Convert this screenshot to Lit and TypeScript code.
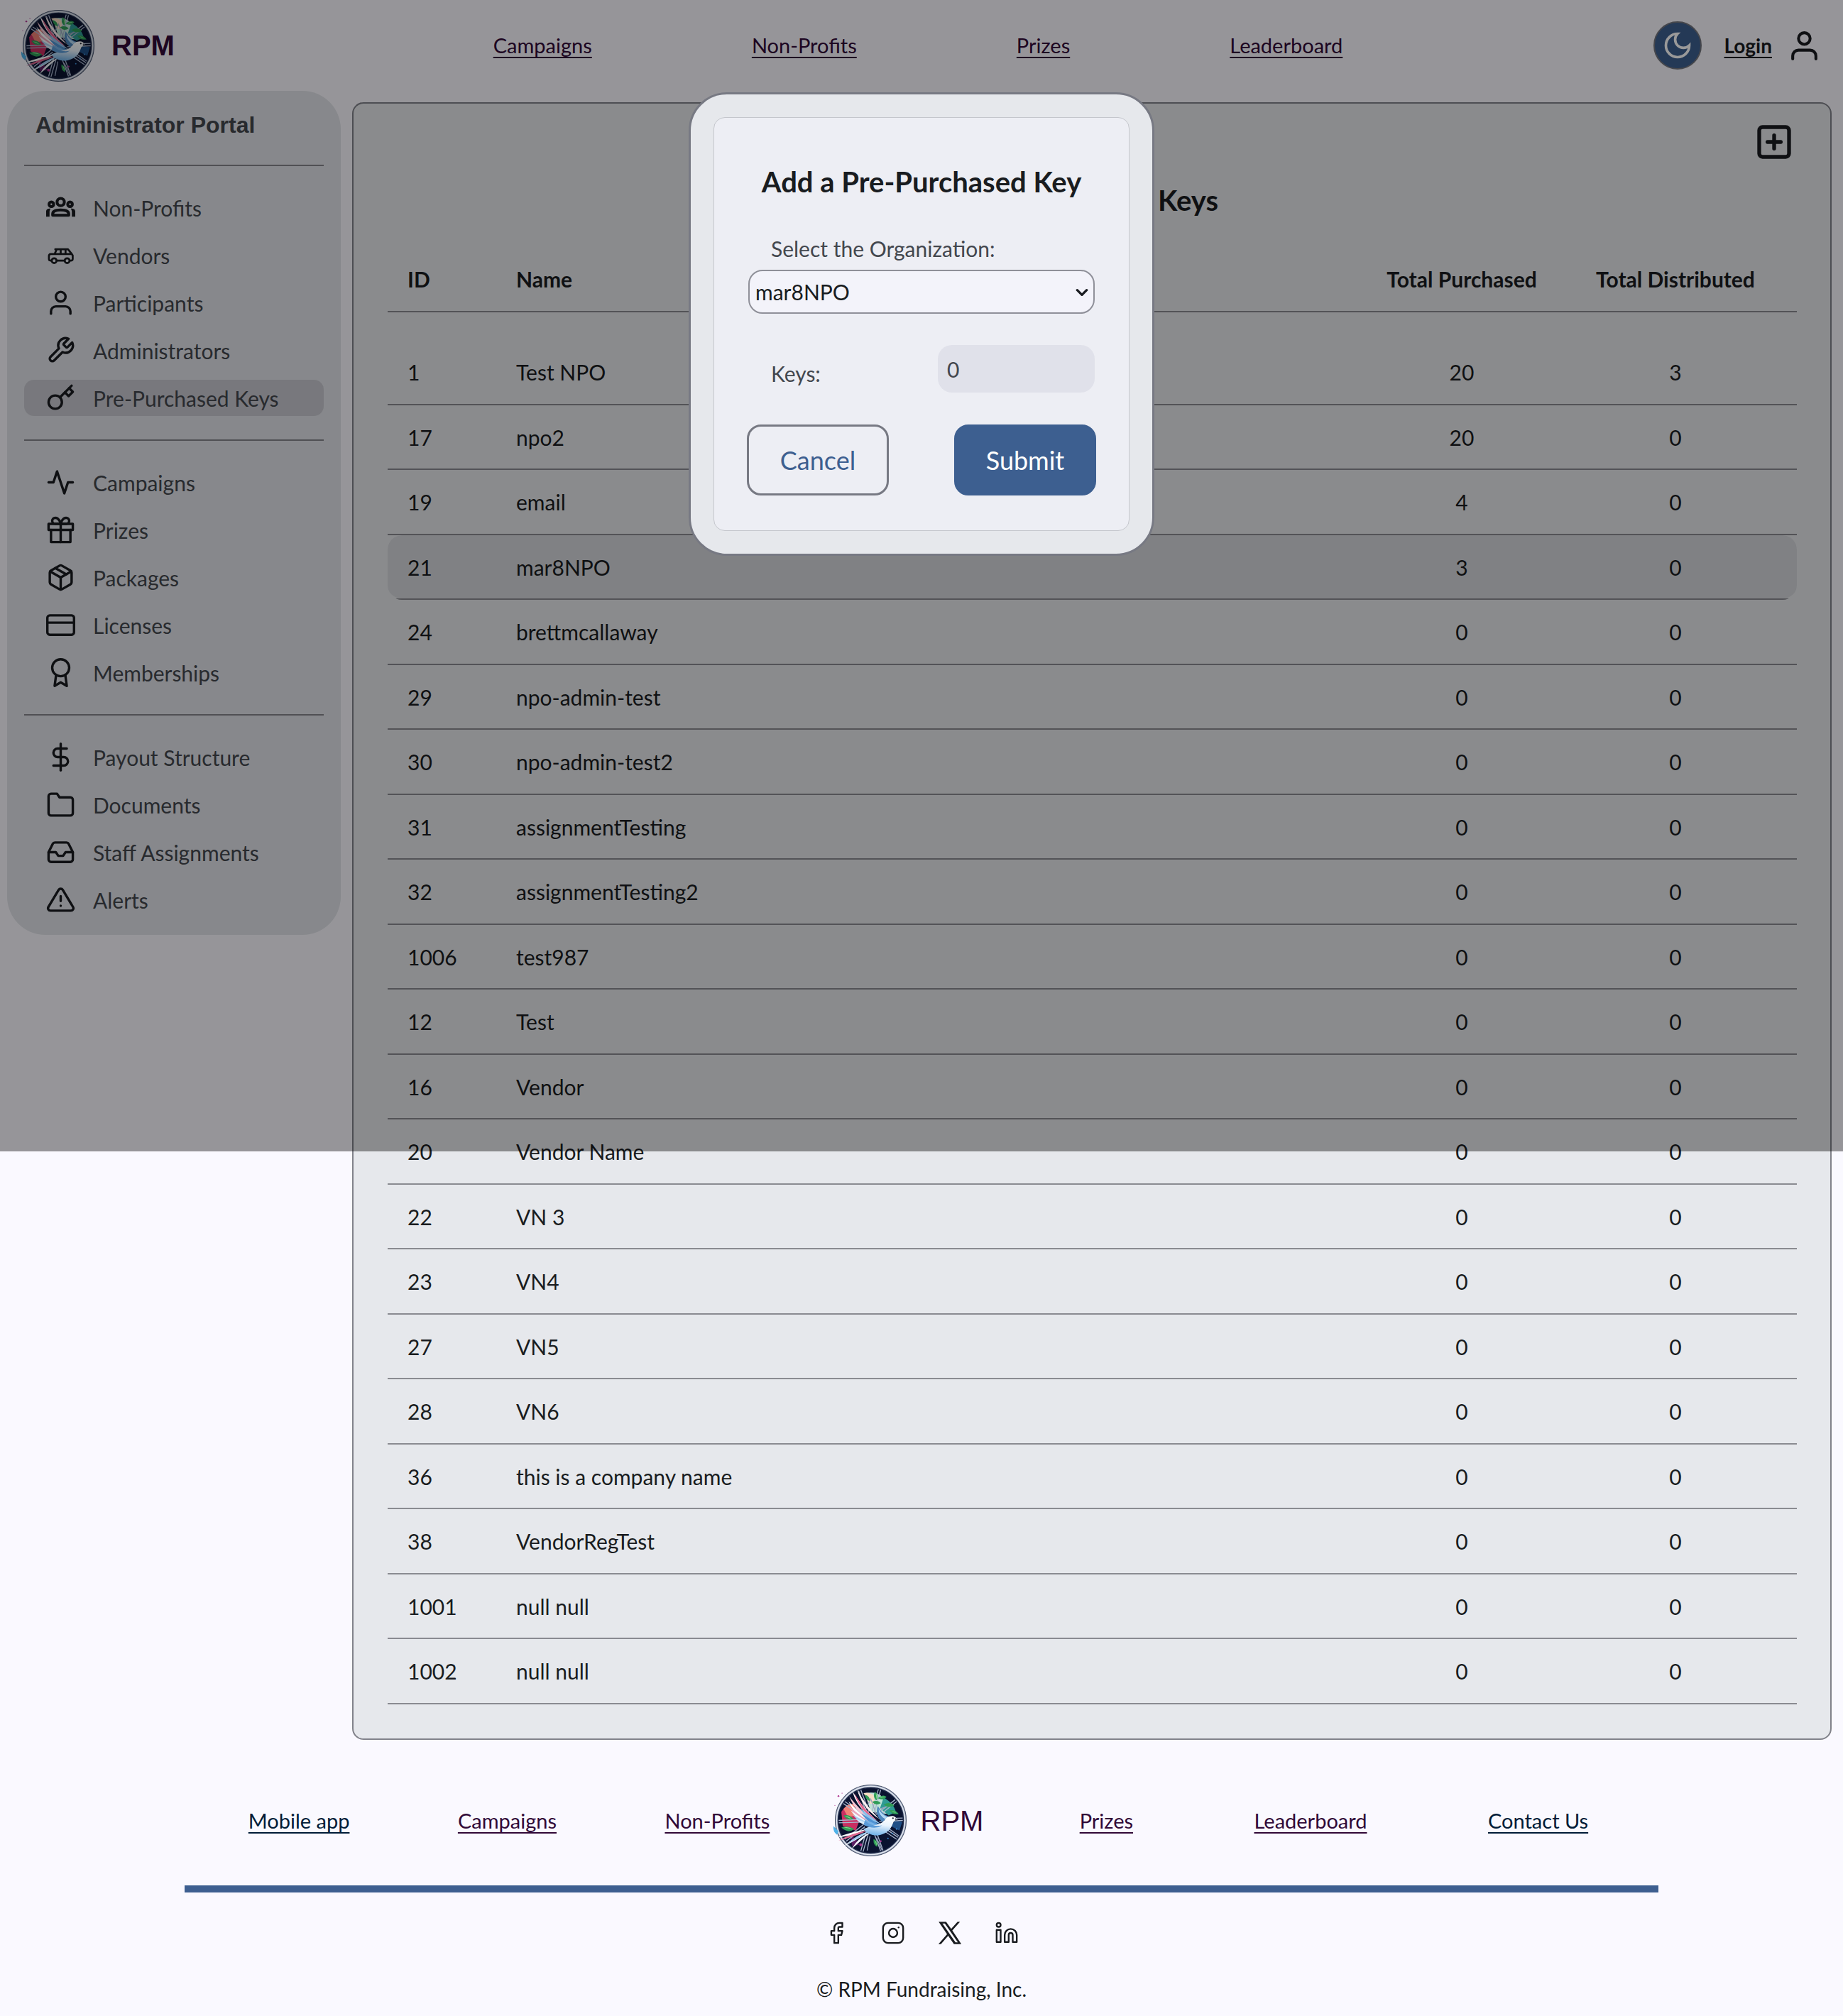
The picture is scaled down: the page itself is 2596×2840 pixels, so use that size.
import { LitElement, html, css, svg, nothing } from "lit";
import { customElement, property } from "lit/decorators.js";
import { classMap } from "lit/directives/class-map.js";

const glyphs: Record<string, unknown> = {
  user: svg`<path d="M20 21v-2a4 4 0 0 0-4-4H8a4 4 0 0 0-4 4v2"/><circle cx="12" cy="7" r="4"/>`,
  wrench: svg`<path d="M14.7 6.3a1 1 0 0 0 0 1.4l1.6 1.6a1 1 0 0 0 1.4 0l3.77-3.77a6 6 0 0 1-7.94 7.94l-6.91 6.91a2.12 2.12 0 0 1-3-3l6.91-6.91a6 6 0 0 1 7.94-7.94l-3.76 3.76z"/>`,
  key: svg`<circle cx="7.5" cy="15.5" r="5.5"/><path d="m21 2-9.6 9.6"/><path d="m15.5 7.5 3 3L22 7l-3-3"/>`,
  activity: svg`<polyline points="22 12 18 12 15 21 9 3 6 12 2 12"/>`,
  gift: svg`<polyline points="20 12 20 22 4 22 4 12"/><rect x="2" y="7" width="20" height="5"/><path d="M12 22V7"/><path d="M12 7H7.5a2.5 2.5 0 0 1 0-5C11 2 12 7 12 7z"/><path d="M12 7h4.5a2.5 2.5 0 0 0 0-5C13 2 12 7 12 7z"/>`,
  pack: svg`<path d="M16.5 9.4 7.55 4.24"/><path d="M21 16V8a2 2 0 0 0-1-1.73l-7-4a2 2 0 0 0-2 0l-7 4A2 2 0 0 0 3 8v8a2 2 0 0 0 1 1.73l7 4a2 2 0 0 0 2 0l7-4A2 2 0 0 0 21 16z"/><polyline points="3.29 7 12 12 20.71 7"/><path d="M12 22V12"/>`,
  card: svg`<rect x="1" y="4" width="22" height="16" rx="2"/><path d="M1 10h22"/>`,
  award: svg`<circle cx="12" cy="8" r="7"/><polyline points="8.21 13.89 7 23 12 20 17 23 15.79 13.88"/>`,
  dollar: svg`<path d="M12 1v22"/><path d="M17 5H9.5a3.5 3.5 0 0 0 0 7h5a3.5 3.5 0 0 1 0 7H6"/>`,
  folder: svg`<path d="M22 19a2 2 0 0 1-2 2H4a2 2 0 0 1-2-2V5a2 2 0 0 1 2-2h5l2 3h9a2 2 0 0 1 2 2z"/>`,
  inbox: svg`<polyline points="22 12 16 12 14 15 10 15 8 12 2 12"/><path d="M5.45 5.11 2 12v6a2 2 0 0 0 2 2h16a2 2 0 0 0 2-2v-6l-3.45-6.89A2 2 0 0 0 16.76 4H7.24a2 2 0 0 0-1.79 1.11z"/>`,
  alert: svg`<path d="M10.29 3.86 1.82 18a2 2 0 0 0 1.71 3h16.94a2 2 0 0 0 1.71-3L13.71 3.86a2 2 0 0 0-3.42 0z"/><path d="M12 9v4M12 17v.01"/>`,
  people: svg`<g stroke-width="2.4"><circle cx="12" cy="7.4" r="3"/><circle cx="4.3" cy="9.2" r="1.9"/><circle cx="19.7" cy="9.2" r="1.9"/><path d="M5.4 18.3v-1.1c0-2.4 2.800-3.300 6.600-3.300s6.600.9 6.600 3.300v1.100z"/></g><path class="solid" d="M0 19.500v-4.400c0-1.600 1.400-2.400 3.700-2.400-.6 1-.9 1.900-.9 3.100v3.700zM24 19.500v-4.400c0-1.600-1.400-2.400-3.700-2.400.6 1 .9 1.900.9 3.100v3.700z"/>`,
  van: svg`<g stroke-width="1.6"><path d="M4.500 16.400H3.600a1.300 1.300 0 0 1-1.300-1.300v-2.500a1.600 1.600 0 0 1 1.500-1.600h17.400l.7 1.300v2.800a1.300 1.300 0 0 1-1.300 1.300h-.5M8.600 16.400h6.600M7 11l1.700-3.900h9.300L21.200 11M12 7.100V11M16 7.100V11M7.500 7.100h1.300"/><circle cx="6.600" cy="16.500" r="2"/><circle cx="17.300" cy="16.500" r="2"/></g>`,
  plus: svg`<rect x="3" y="3" width="18" height="18" rx="2"/><path d="M12 8v8M8 12h8"/>`,
  moon: svg`<path stroke-linejoin="miter" d="M12 3a6 6 0 0 0 9 9 9 9 0 1 1-9-9z"/>`,
  chevron: svg`<path d="m4 8 8 8 8-8"/>`,
  facebook: svg`<path d="M18 2h-3a5 5 0 0 0-5 5v3H7v4h3v8h4v-8h3l1-4h-4V7a1 1 0 0 1 1-1h3z"/>`,
  instagram: svg`<rect x="2" y="2" width="20" height="20" rx="5"/><circle cx="12" cy="12" r="4.2"/><path d="M17.500 6.500v.01"/>`,
  x: svg`<path class="solid" d="M.8.8h7.400l5.100 7.200L19.600.8h2.500l-7.700 8.800 9 13.600h-7.400l-5.700-8.300-7.200 8.300H.6l8.600-9.900zM4.600 2.600l13 18.700h2.300L7 2.600z"/>`,
  linkedin: svg`<path d="M16 8a6 6 0 0 1 6 6v7h-4v-7a2 2 0 0 0-4 0v7h-4v-7a6 6 0 0 1 6-6z"/><rect x="2" y="9" width="4" height="12"/><circle cx="4" cy="4" r="2"/>`,
};

@customElement("app-icon")
export class AppIcon extends LitElement {
  @property() name = "user";
  static styles = css`
    :host { display: block; width: 41px; height: 41px; flex: none; }
    svg { display: block; width: 100%; height: 100%; fill: none; stroke: currentColor; stroke-width: var(--stroke, 2); stroke-linecap: round; stroke-linejoin: round; overflow: visible; }
    .solid { fill: currentColor; stroke: none; }
  `;
  render() {
    return html`<svg viewBox="0 0 24 24" aria-hidden="true">${glyphs[this.name] ?? nothing}</svg>`;
  }
}

/** One feather: tip x/y, root x/y, sideways bow of its spine, half width, fill. */
type Feather = [number, number, number, number, number, number, string];

const wingFeathers: Feather[] = [
  [24, 9, 58, 50, -7, 4, "#ffffff"],
  [31, 7, 62, 48, -7, 3, "#fdf1f0"],
  [20, 16, 56, 52, -8, 4, "#f3c6d3"],
  [27, 12, 60, 51, -8, 3, "#e2638c"],
  [19, 23, 56, 55, -8, 4, "#ffffff"],
  [20, 30, 56, 56, -7, 4, "#e9a6bd"],
  [22, 36, 56, 57, -6, 4, "#f2f8fe"],
  [25, 42, 57, 58, -5, 4, "#a8d0f0"],
  [29, 48, 60, 59, -4, 4, "#dcedfa"],
  [35, 33, 64, 55, -4, 4, "#8cc0ea"],
  [37, 40, 64, 57, -4, 4, "#4f93d3"],
  [40, 48, 64, 59, -3, 4, "#74b0e4"],
];

const tailFeathers: Feather[] = [
  [2, 74, 46, 62, -1, 3, "#ffffff"],
  [5, 78, 46, 64, 1, 3, "#e0678f"],
  [12, 86, 48, 65, 1, 3, "#ffffff"],
  [17, 83, 48, 65, 2, 3, "#9ecbf0"],
  [23, 90, 50, 66, 3, 3, "#f4f8fd"],
];

function feather([tx, ty, rx, ry, bow, half, fill]: Feather) {
  const len = Math.hypot(rx - tx, ry - ty);
  const nx = -(ry - ty) / len;
  const ny = (rx - tx) / len;
  const mx = (tx + rx) / 2;
  const my = (ty + ry) / 2;
  const at = (k: number) => `${mx - nx * k} ${my - ny * k}`;
  return svg`<path d="M${tx} ${ty}Q${at(bow - half)} ${rx} ${ry}Q${at(bow + half)} ${tx} ${ty}z" fill=${fill}/>`;
}

@customElement("rpm-logo")
export class RpmLogo extends LitElement {
  static styles = css`
    :host { display: block; width: 101px; height: 101px; flex: none; }
    svg { display: block; width: 100%; height: 100%; overflow: visible; }
  `;
  render() {
    const spokes = Array.from({ length: 20 }, (_, i) => {
      const a = (i * Math.PI) / 10 + 0.12;
      const b = a + (i % 2 ? 0.12 : -0.12);
      return svg`<line x1=${50 + 12 * Math.cos(a)} y1=${50 + 12 * Math.sin(a)} x2=${50 + 45 * Math.cos(b)} y2=${50 + 45 * Math.sin(b)}/>`;
    });
    return html`<svg viewBox="0 0 100 100" role="img" aria-label="RPM dove and wheel">
      <defs>
        <linearGradient id="body" x1="0.6" y1="0" x2="0.4" y2="1">
          <stop offset="0" stop-color="#fff"/><stop offset=".45" stop-color="#eaf4fd"/><stop offset="1" stop-color="#6fb0e6"/>
        </linearGradient>
      </defs>
      <circle cx="50" cy="50" r="49.5" fill="#a7b1c4" stroke="#47526b"/>
      <circle cx="50" cy="50" r="45.500" fill="#0a1330"/>
      <path d="M9 38q6-10 16-10l10 20-6 16-18-6z" fill="#c92f62"/>
      <path d="M12 34q6-8 14-7l6 16-14 2z" fill="#f08176"/>
      <path d="M42 12q16-3 24 5l16 14-8 10-24-3z" fill="#bfe3d8"/>
      <path d="M40 12q8-2 14 3l2 13-8-2z" fill="#f7dcc4"/>
      <path d="M68 18q14 8 17 20l-10 5-12-10z" fill="#2e9a94"/>
      <path d="M84 50l10 2-4 12-12-6z" fill="#1f4f86"/>
      <path d="M22 72q8 2 12 12l-10 2z" fill="#5a1f63"/>
      <g stroke="#a9b5cc" stroke-width="1.3">${spokes}</g>
      <g fill="none" stroke="#9aa6bf" stroke-width="1.3">
        <path d="M43 34 50 20l8 22M58 74l8 18M45 92l4-20M62 34l20-6M76 62l14 10"/>
      </g>
      <circle cx="50" cy="50" r="45.500" fill="none" stroke="#1a2544" stroke-width="1.500"/>
      <circle cx="50" cy="50" r="47.600" fill="none" stroke="#e3e8f1" stroke-width="1.200"/>
      <g fill="#2f9c57">
        <path d="M42 14q7 2 7 9-7-2-7-9zM56 10q6 5 2 12-6-5-2-12zM60 19q7-6 12-2-4 6-12 2zM52 24q8-3 12 2-7 4-12-2z"/>
        <path d="M68 28q8-5 15 1-8 5-15-1zM76 36q8-2 13 5-9 2-13-5zM12 43q8-2 14 5-9 3-14-5zM9 60q9-4 18 2-8 7-18-2zM54 76q7 3 5 11-6-3-5-11z"/>
      </g>
      <g fill="#8be08f">
        <path d="M57 12q3 4 1 8zM62 19q4-3 8-2zM79 37q4 0 7 3zM14 44q6 0 9 4zM12 60q6-2 12 2zM56 78q3 3 2 7z"/>
      </g>
      <g fill="#b03792">
        <circle cx="5" cy="16" r="1.200"/><circle cx="10" cy="12" r=".7"/><circle cx="64" cy="79" r="1.200"/><circle cx="36" cy="84" r="2"/><circle cx="0" cy="29" r=".6"/>
      </g>
      <g fill="#3d8bd0"><circle cx="80" cy="68" r="1"/><circle cx="74" cy="75" r="1"/><circle cx="86" cy="62" r="1"/></g>
      <path d="M-2 58q-1 8 5 12l2-5z" fill="#4fb2e8"/>
      <path d="M60 30Q55 42 66 52l10-7Q66 42 60 30z" fill="#4e87bd"/>
      <path d="M61 34q0 9 9 14l3-3Q65 42 61 34z" fill="#b5d9f4"/>
      ${tailFeathers.map(feather)}
      ${wingFeathers.map(feather)}
      <path d="M87 49q-3-6-9-5-6 0-9 6-3 4-11 6-9 2-18 6 5 9 19 9 17-2 22-17 1-4 6-5z" fill="url(#body)"/>
      <path d="M42 50q10 10 24 7-11 7-26-1z" fill="#5a9bd8"/>
      <path d="M84 46.500l4.500 3-4.500 1z" fill="#59616f"/>
      <circle cx="81" cy="46.800" r="1.100" fill="#141a28"/>
    </svg>`;
  }
}

type NavItem = { icon: string; label: string; current?: boolean };
const menu: NavItem[][] = [
  [
    { icon: "people", label: "Non-Profits" },
    { icon: "van", label: "Vendors" },
    { icon: "user", label: "Participants" },
    { icon: "wrench", label: "Administrators" },
    { icon: "key", label: "Pre-Purchased Keys", current: true },
  ],
  [
    { icon: "activity", label: "Campaigns" },
    { icon: "gift", label: "Prizes" },
    { icon: "pack", label: "Packages" },
    { icon: "card", label: "Licenses" },
    { icon: "award", label: "Memberships" },
  ],
  [
    { icon: "dollar", label: "Payout Structure" },
    { icon: "folder", label: "Documents" },
    { icon: "inbox", label: "Staff Assignments" },
    { icon: "alert", label: "Alerts" },
  ],
];

const holders: [number, string, number, number][] = [
  [1, "Test NPO", 20, 3],
  [17, "npo2", 20, 0],
  [19, "email", 4, 0],
  [21, "mar8NPO", 3, 0],
  [24, "brettmcallaway", 0, 0],
  [29, "npo-admin-test", 0, 0],
  [30, "npo-admin-test2", 0, 0],
  [31, "assignmentTesting", 0, 0],
  [32, "assignmentTesting2", 0, 0],
  [1006, "test987", 0, 0],
  [12, "Test", 0, 0],
  [16, "Vendor", 0, 0],
  [20, "Vendor Name", 0, 0],
  [22, "VN 3", 0, 0],
  [23, "VN4", 0, 0],
  [27, "VN5", 0, 0],
  [28, "VN6", 0, 0],
  [36, "this is a company name", 0, 0],
  [38, "VendorRegTest", 0, 0],
  [1001, "null null", 0, 0],
  [1002, "null null", 0, 0],
];

@customElement("app-root")
export class AppRoot extends LitElement {
  @property({ type: Number }) selectedId = 21;

  static styles = css`
    :host { display: block; position: relative; min-height: 100vh; background: #faf9ff; color: #191c20; font: 30px/36px Lato, "Open Sans", sans-serif; }
    * { box-sizing: border-box; }
    button, select, input { font: inherit; margin: 0; }
    ul { list-style: none; margin: 0; padding: 0; }
    h1, h2, p { margin: 0; }

    header { display: grid; grid-template-columns: 1fr 47% 1fr; align-items: center; height: 128px; padding: 0 30px 0 20px; }
    .brand { display: flex; align-items: center; gap: 24px; padding-left: 12px; font: 40px/48px "Liberation Sans", Arial, sans-serif; color: #310938; text-decoration: none; }
    .brand.strong { font-weight: 700; }
    .top-links { display: flex; justify-content: space-between; }
    .link { color: #310938; font-size: 29px; text-decoration: underline; text-decoration-thickness: 2px; text-underline-offset: 5px; }
    .link.fresh { color: #001c38; }
    .account { display: flex; align-items: center; justify-content: flex-end; }
    .theme { display: grid; place-items: center; width: 68px; height: 68px; padding: 0; border: 2px solid #75777f; border-radius: 50%; background: #3d5f90; color: #fff; margin-right: 32px; }
    .theme app-icon { width: 44px; height: 44px; }
    .login { display: flex; align-items: center; gap: 21px; color: #191c20; font-weight: 700; font-size: 28px; text-decoration: none; }
    .login span { text-decoration: underline; text-decoration-thickness: 2px; text-underline-offset: 5px; }
    .login app-icon { width: 49px; height: 49px; }

    .body { display: flex; align-items: flex-start; gap: 16px; padding: 0 16px 0 10px; }
    .side { flex: none; width: 470px; padding: 24px; border-radius: 54px; background: #e1e3e9; color: #43474e; }
    .side h2 { font: 700 32px/48px "Liberation Sans", Arial, sans-serif; padding: 0 16px 32px; }
    .side ul { display: flex; flex-direction: column; gap: 16px; padding: 33px 0; border-top: 2px solid #85868d; }
    .side ul:last-child { padding-bottom: 0; }
    .side a { display: flex; align-items: center; gap: 25px; height: 51px; padding-left: 31px; border-radius: 14px; color: inherit; text-decoration: none; }
    .side a.current { background: #c8c9d0; }
    .side app-icon { color: #191c20; }

    main { flex: 1; min-width: 0; margin-top: 16px; padding: 26px 47px 48px 48px; border: 2px solid #81828a; border-radius: 16px; background: #e6e8ec; }
    .tools { display: flex; justify-content: flex-end; height: 56px; padding-right: 4px; }
    .icon-button { display: block; padding: 0; border: 0; background: none; color: inherit; }
    .icon-button app-icon { width: 56px; height: 56px; --stroke: 2.3; }
    main h1 { padding: 30px 0 42px; text-align: center; font-size: 40px; line-height: 48px; font-weight: 700; }
    table { width: 100%; border-collapse: separate; border-spacing: 0; table-layout: fixed; }
    th, td { padding: 0 28px; height: 92px; border-bottom: 2px solid transparent; background-clip: padding-box; text-align: left; font-weight: 400; }
    th { font-weight: 700; }
    tr { background: linear-gradient(#8a8b91, #8a8b91) bottom / 100% 2px no-repeat; }
    tbody tr:nth-child(even) td { height: 91px; }
    tbody tr:first-child td { height: 131px; padding-top: 39px; }
    .c-id { width: 153px; }
    .c-bought { width: 260px; }
    .c-given { width: 342px; }
    .num { text-align: center; white-space: nowrap; padding: 0; }
    .picked td { background-color: #d6d8dc; }
    .picked td:first-child { border-radius: 20px 0 0 20px; }
    .picked td:last-child { border-radius: 0 20px 20px 0; }

    footer { padding: 63px 10% 16px; }
    .foot-nav { display: grid; grid-template-columns: 1fr auto 1fr; align-items: center; padding: 0 14px 41px; border-bottom: 10px solid #3d5f90; }
    .foot-nav ul { display: flex; justify-content: space-around; }
    .foot-nav .brand { gap: 20px; padding: 0 50px 0 15px; }
    .social { display: flex; justify-content: center; gap: 46px; padding: 40px 0 44px; }
    .social a { color: #191c20; }
    .social app-icon { width: 34px; height: 34px; --stroke: 1.7; }
    .legal { text-align: center; font-size: 28px; }

    .veil { position: absolute; top: 0; left: 0; width: 100%; height: 1622px; display: flex; justify-content: center; align-items: flex-start; padding-top: 130px; background: rgba(0, 0, 0, 0.4); }
    .dialog { width: 656px; padding: 32px; border: 3px solid #777983; border-radius: 54px; background: #e6e8ec; }
    form { padding: 62px 46px 49px; border: 1px solid #c4c6cc; border-radius: 16px; background: #edeef4; color: #43474e; }
    form h2 { text-align: center; font-size: 40px; line-height: 56px; font-weight: 700; color: #191c20; white-space: nowrap; padding-bottom: 48px; }
    .org { display: flex; flex-direction: column; }
    .org label { padding: 0 34px 12px; }
    .pick { position: relative; margin: 0 2px; }
    .pick select { appearance: none; display: block; width: 100%; height: 62px; padding: 0 48px 0 8px; border: 2px solid #8f9099; border-radius: 20px; background: #f3f3fa; color: #191c20; }
    .pick app-icon { position: absolute; right: 8px; top: 22px; width: 20px; height: 20px; --stroke: 4; color: #191c20; pointer-events: none; }
    .keys { display: flex; justify-content: space-between; align-items: center; padding: 44px 2px 45px 34px; }
    .keys label { padding-top: 12px; }
    .keys input { width: 221px; height: 67px; padding: 0 13px; border: 0; border-radius: 20px; background: #e0e1ea; color: #43474e; }
    .actions { display: flex; justify-content: space-between; }
    .actions button { width: 200px; height: 100px; border-radius: 20px; border: 3px solid #777983; background: none; color: #3d5f90; font-size: 36px; }
    .actions .go { border-color: #3d5f90; background: #3d5f90; color: #fff; }
  `;

  private link(label: string, fresh = false) {
    return html`<a class=${classMap({ link: true, fresh })} href="#">${label}</a>`;
  }

  render() {
    return html`
      <header>
        <a class="brand strong" href="#"><rpm-logo></rpm-logo>RPM</a>
        <nav class="top-links">
          ${["Campaigns", "Non-Profits", "Prizes", "Leaderboard"].map((l) => this.link(l))}
        </nav>
        <div class="account">
          <button class="theme" aria-label="Dark mode"><app-icon name="moon"></app-icon></button>
          <a class="login" href="#"><span>Login</span><app-icon name="user"></app-icon></a>
        </div>
      </header>

      <div class="body">
        <nav class="side">
          <h2>Administrator Portal</h2>
          ${menu.map(
            (group) => html`<ul>
              ${group.map(
                (n) => html`<li><a href="#" class=${classMap({ current: !!n.current })}><app-icon name=${n.icon}></app-icon>${n.label}</a></li>`
              )}
            </ul>`
          )}
        </nav>
        <main>
          <div class="tools"><button class="icon-button" aria-label="Add key"><app-icon name="plus"></app-icon></button></div>
          <h1>Pre-Purchased Keys</h1>
          <table>
            <thead>
              <tr><th class="c-id">ID</th><th>Name</th><th class="c-bought num">Total Purchased</th><th class="c-given num">Total Distributed</th></tr>
            </thead>
            <tbody>
              ${holders.map(
                ([id, name, bought, given]) => html`<tr class=${classMap({ picked: id === this.selectedId })}>
                  <td>${id}</td><td>${name}</td><td class="num">${bought}</td><td class="num">${given}</td>
                </tr>`
              )}
            </tbody>
          </table>
        </main>
      </div>

      <footer>
        <div class="foot-nav">
          <ul>
            <li>${this.link("Mobile app", true)}</li>
            <li>${this.link("Campaigns")}</li>
            <li>${this.link("Non-Profits")}</li>
          </ul>
          <a class="brand" href="#"><rpm-logo></rpm-logo>RPM</a>
          <ul>
            <li>${this.link("Prizes")}</li>
            <li>${this.link("Leaderboard")}</li>
            <li>${this.link("Contact Us", true)}</li>
          </ul>
        </div>
        <div class="social">
          ${["facebook", "instagram", "x", "linkedin"].map(
            (n) => html`<a href="#" aria-label=${n}><app-icon name=${n}></app-icon></a>`
          )}
        </div>
        <p class="legal">© RPM Fundraising, Inc.</p>
      </footer>

      <div class="veil">
        <div class="dialog" role="dialog" aria-labelledby="dialog-title">
          <form @submit=${(e: Event) => e.preventDefault()}>
            <h2 id="dialog-title">Add a Pre-Purchased Key</h2>
            <div class="org">
              <label for="org">Select the Organization:</label>
              <div class="pick">
                <select id="org">
                  <option>mar8NPO</option>
                </select>
                <app-icon name="chevron"></app-icon>
              </div>
            </div>
            <div class="keys">
              <label for="keys">Keys:</label>
              <input id="keys" type="text" inputmode="numeric" value="0" />
            </div>
            <div class="actions">
              <button type="button">Cancel</button>
              <button type="submit" class="go">Submit</button>
            </div>
          </form>
        </div>
      </div>
    `;
  }
}
